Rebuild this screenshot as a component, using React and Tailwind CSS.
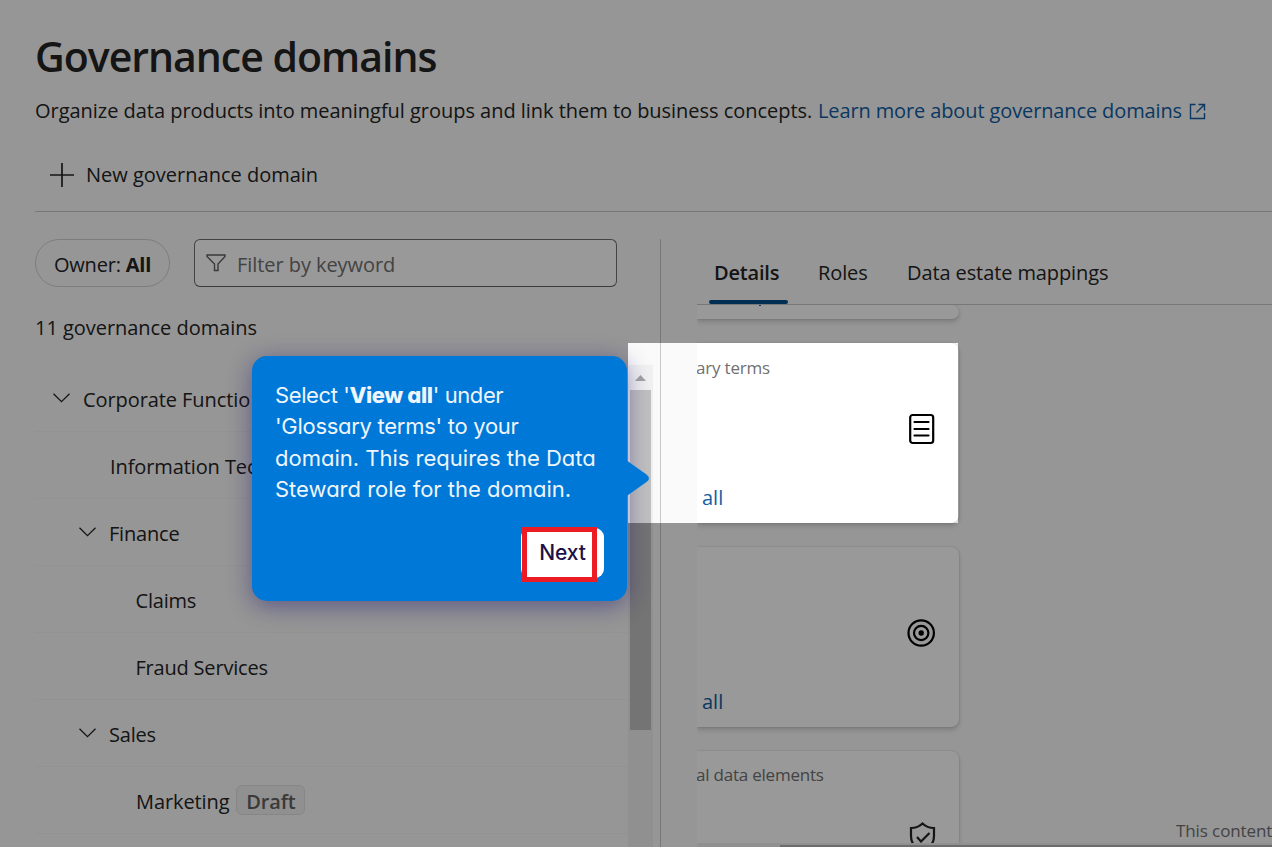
const domains = [
  { name: "Corporate Functions", label: "Corporate Functio", indent: "pl-[18px]", open: true, track: "tracking-[-0.08px]" },
  { name: "Information Technology", label: "Information Tec", indent: "pl-[75px]", track: "tracking-[-0.1px]" },
  { name: "Finance", label: "Finance", indent: "pl-[44px]", open: true, track: "tracking-[-0.2px]" },
  { name: "Claims", label: "Claims", indent: "pl-[100.5px]", track: "tracking-[-0.2px]" },
  { name: "Fraud Services", label: "Fraud Services", indent: "pl-[100.5px]", track: "tracking-[-0.2px]" },
  { name: "Sales", label: "Sales", indent: "pl-[44px]", open: true, track: "tracking-[-0.2px]" },
  { name: "Marketing", label: "Marketing", indent: "pl-[101px]", draft: true, track: "tracking-[-0.1px]" },
];

function Chevron() {
  return (
    <svg className="mr-[13px] mt-[-4px] h-[10px] w-[17px] shrink-0" viewBox="0 0 17 10" fill="none" stroke="#242424" strokeWidth="1.3">
      <path d="M0.5 0.7 8.5 8.7 16.5 0.7" />
    </svg>
  );
}

function Header() {
  return (
    <header className="ml-[35px] h-[212px] shrink-0 border-b border-[#c8c8c8]">
      <h1 className="pt-[31px] text-[41px] font-semibold leading-[50px] tracking-[-1px]">Governance domains</h1>
      <p className="mt-[15px] flex items-center text-[20px] leading-[30px]">
        <span className="w-[783px] whitespace-nowrap tracking-[-0.03px]">
          Organize data products into meaningful groups and link them to business concepts.
        </span>
        <span className="w-[371px] whitespace-nowrap tracking-[-0.12px] text-[#115ea3]">Learn more about governance domains</span>
        <svg className="h-[17px] w-[17px]" viewBox="0 0 17 17" fill="none" stroke="#115ea3" strokeWidth="1.4">
          <path d="M6.5 1.5H1.5V15.5H15.5V10M9.500 1.5H15.5V7.500M15.5 1.500 7.5 9.5" />
        </svg>
      </p>
      <div className="mt-[34px] flex items-center pl-[14px]">
        <svg className="h-[26px] w-[26px]" viewBox="0 0 26 26" fill="none" stroke="#242424" strokeWidth="1.7">
          <path d="M13 1V25M1 13H25" />
        </svg>
        <span className="ml-[11px] text-[20px] leading-[30px]">New governance domain</span>
      </div>
    </header>
  );
}

function Scrollbar() {
  return (
    <div className="mt-[153px] flex w-[25px] shrink-0 flex-col items-center bg-[#f1f1f1]">
      <div className="flex h-[25px] items-center">
        <svg className="h-[6px] w-[11px]" viewBox="0 0 11 6">
          <path d="M5.5 0 11 6H0Z" fill="#a3a3a3" />
        </svg>
      </div>
      <div className="h-[340px] w-[21px] bg-[#c1c1c1]" />
    </div>
  );
}

function DomainList() {
  return (
    <section className="flex w-[593px] shrink-0 flex-col pt-[27px]">
      <div className="flex">
        <div className="flex h-[48px] w-[135px] items-center justify-center rounded-full border border-[#d1d1d1] pt-[3px] text-[20px] tracking-[-0.2px]">
          Owner:&nbsp;<b className="font-bold">All</b>
        </div>
        <div className="ml-[24px] flex h-[48px] w-[423px] items-center rounded-[6px] border border-[#707070] border-b-[#616161] bg-white pl-[11px] text-[20px] text-[#707070]">
          <svg className="h-[18px] w-[20px]" viewBox="0 0 20 18" fill="none" stroke="#616161" strokeWidth="1.4">
            <path d="M1 1H19V2.5L12 10V16.5H8.500V10L1 2.5Z" />
          </svg>
          <span className="ml-[11px] pt-[3px] tracking-[-0.06px]">Filter by keyword</span>
        </div>
      </div>
      <p className="mt-[26px] text-[20px] leading-[30px] tracking-[-0.04px]">11 governance domains</p>
      <ul className="mt-[22px]">
        {domains.map((d) => (
          <li key={d.name} className={`flex h-[67px] items-center border-b border-[#f4f4f4] pt-[3px] text-[20px] ${d.indent} ${d.track}`}>
            {d.open && <Chevron />}
            <span>{d.label}</span>
            {d.draft && (
              <span className="ml-[7px] mt-[-3px] flex h-[30px] w-[69px] items-center justify-center rounded-[6px] border border-[#e0e0e0] bg-[#f0f0f0] pt-[3px] text-[20px] font-semibold text-[#616161]">
                Draft
              </span>
            )}
          </li>
        ))}
      </ul>
    </section>
  );
}

const card = "flex w-[262px] shrink-0 flex-col rounded-r-[8px] bg-white shadow-[0_0_2px_rgba(0,0,0,0.18),0_3px_5px_rgba(0,0,0,0.16)]";

function Details() {
  return (
    <section className="ml-[36px] flex min-w-0 grow flex-col overflow-hidden pt-[27px]">
      <nav className="flex h-[66px] shrink-0 border-b border-[#c8c8c8] pl-[12px] text-[20px] tracking-[-0.1px]">
        <div className="flex w-[79px] flex-col justify-between">
          <span className="pl-[5px] pt-[19px] font-semibold leading-[30px] tracking-[-0.2px]">Details</span>
          <span className="h-[4px] rounded-full bg-[#004f8b]" />
        </div>
        <span className="ml-[30px] w-[89px] pt-[19px] leading-[30px]">Roles</span>
        <span className="whitespace-nowrap pt-[19px] leading-[30px]">Data estate mappings</span>
      </nav>
      <div className="flex h-[538px] shrink-0 overflow-hidden">
        <div className="flex w-[300px] shrink-0 flex-col gap-[24px]">
          <div className={`${card} h-[14px]`}>
            <span className="ml-[62px] h-[1px] w-[2px] bg-[#115ea3]" />
          </div>
          <div className={`${card} h-[180px]`}>
            <span className="ml-[-1px] pt-[13px] text-[17px] leading-[24px] tracking-[-0.2px] text-[#707070]">ary terms</span>
            <svg className="ml-[211px] mt-[33px] h-[32px] w-[27px]" viewBox="0 0 27 32" fill="none" stroke="#000" strokeWidth="2.2" strokeLinecap="round">
              <rect x="2.200" y="2" width="23" height="28" rx="2.500" />
              <path d="M6.500 9H20.500M6.500 16H20.500M6.500 22.500H20.500" />
            </svg>
            <span className="ml-[5px] mt-[38px] text-[20px] leading-[30px] text-[#115ea3]">all</span>
          </div>
          <div className={`${card} h-[180px]`}>
            <svg className="ml-[210px] mt-[72px] h-[28px] w-[28px]" viewBox="0 0 28 28" fill="none" stroke="#000" strokeWidth="2.200">
              <circle cx="14.200" cy="14" r="12.700" />
              <circle cx="14.200" cy="14" r="7.200" />
              <circle cx="14.200" cy="14" r="2.700" fill="#000" stroke="none" />
            </svg>
            <span className="ml-[5px] mt-[40px] text-[20px] leading-[30px] text-[#115ea3]">all</span>
          </div>
          <div className={`${card} h-[180px]`}>
            <span className="ml-[-1px] pt-[12px] text-[17px] leading-[24px] tracking-[-0.22px] text-[#707070]">al data elements</span>
            <svg className="ml-[212px] mt-[35px] h-[30px] w-[27px]" viewBox="0 0 27 30" fill="none" stroke="#242424" strokeWidth="2.200">
              <path d="M13.500 1.500C10.500 4.500 6 6 2 6V14C2 21 6 26 13.500 29C21 26 25 21 25 14V6C21 6 16.500 4.500 13.500 1.500Z" />
              <path d="M8 15 12 19.500 20.500 11" />
            </svg>
          </div>
        </div>
        <p className="ml-[179px] mt-[513px] shrink-0 whitespace-nowrap text-[17px] leading-[26px] tracking-[-0.1px] text-[#707070]">This content</p>
      </div>
      <div className="flex h-[4px] shrink-0 items-end bg-[#f1f1f1] pl-[83px]">
        <div className="h-[2px] grow bg-[#b5b5b5]" />
      </div>
    </section>
  );
}

function Coachmark() {
  return (
    <div className="absolute left-[251.5px] top-[356px] flex h-[245px] w-[375px] flex-col rounded-[15px] bg-[#0078d7] pl-[23.5px] pt-[24px] font-['Inter'] text-[#eef5fc] shadow-[0_5px_24px_rgba(22,14,110,0.45)]">
      <p className="flex flex-col whitespace-nowrap text-[22px] leading-[31.400px] [font-feature-settings:'cv11']">
        <span className="tracking-[-0.400px]">
          Select '<b className="font-extrabold">View all</b>' under
        </span>
        <span className="tracking-[-0.280px]">'Glossary terms' to your</span>
        <span>domain. This requires the Data</span>
        <span>Steward role for the domain.</span>
      </p>
      <div className="ml-[246px] mt-[22.400px] flex h-[50px] w-[83px] items-center justify-center rounded-[9px] bg-white text-[21px] font-medium tracking-[-0.100px] text-[#1d1147]">
        Next
      </div>
      <div className="absolute left-[270.5px] top-[171px] h-[55px] w-[75px] border-[5px] border-[#ed1c24]" />
      <svg className="absolute left-[374.5px] top-[104px] h-[37px] w-[24px]" viewBox="0 0 24 37">
        <path d="M0 0 20.500 14.500Q25.500 18.500 20.500 22L0 36.500Z" fill="#0078d7" />
      </svg>
    </div>
  );
}

export default function App() {
  return (
    <div className="relative flex h-[847px] w-[1272px] flex-col overflow-hidden bg-[#fafafa] font-['Open_Sans',sans-serif] text-[#242424]">
      <Header />
      <main className="flex h-[635px] pl-[35px]">
        <DomainList />
        <Scrollbar />
        <div className="ml-[7px] mt-[27px] w-px shrink-0 bg-[#c8c8c8]" />
        <Details />
      </main>
      <div className="absolute left-[628px] top-[343px] h-[180px] w-[330px] shadow-[0_0_0_2000px_rgba(0,0,0,0.4)]" />
      <Coachmark />
    </div>
  );
}
